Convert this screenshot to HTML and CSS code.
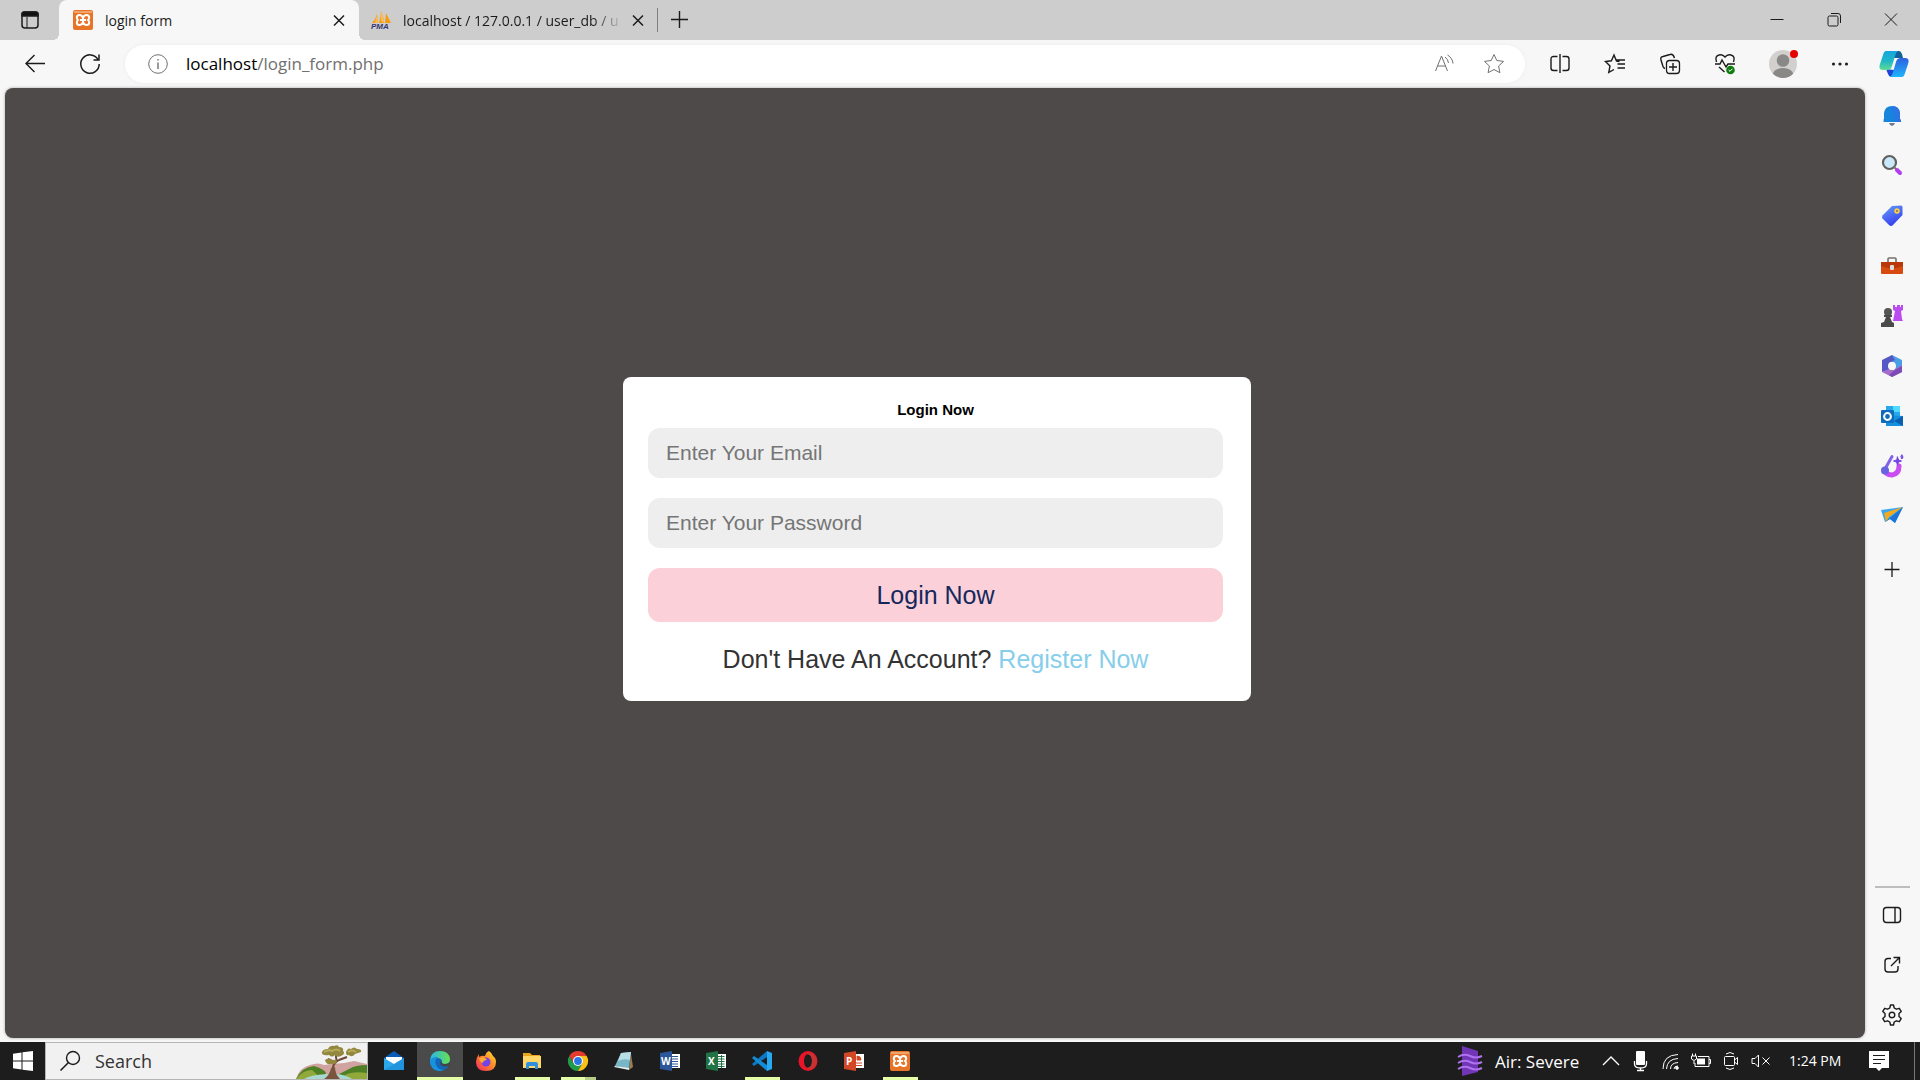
FILE: index.html
```html
<!DOCTYPE html>
<html lang="en">
<head>
<meta charset="utf-8">
<title>login form</title>
<link rel="stylesheet" href="styles.css">
</head>
<body>
<header class="tabstrip">
  <button class="tab-actions" aria-label="Tab actions"><svg class="icon" viewBox="0 0 20 20"><rect x="2" y="2" width="16" height="16" rx="3" stroke-width="1.500"/><path d="M2 4q0-2 2-2h12q2 0 2 2v2H2z" fill="#111" stroke-width="1.500"/><path d="M7 7v11"/></svg></button>
  <div class="tab tab-active">
    <svg class="icon" viewBox="0 0 20 20" stroke="none"><rect width="20" height="20" rx="2" fill="#e77427"/><path d="M1 1h18v2H1z" fill="#f0a36b"/><path d="M6.500 5Q3.800 5 3.800 7.500 3.800 9 5 10 3.800 11 3.800 12.500 3.800 15 6.500 15 9 15 10 12 11 15 13.500 15 16.200 15 16.200 12.500 16.200 11 15 10 16.200 9 16.200 7.500 16.200 5 13.500 5 11 5 10 8 9 5 6.500 5zM10 8v4M7 10h6" fill="none" stroke="#fff" stroke-width="2"/></svg>
    <span class="tab-title">login form</span>
    <button class="tab-close" aria-label="Close tab"><svg class="icon" viewBox="0 0 20 20"><path d="M5 5.500l10 10M15 5.500l-10 10" stroke-width="1.500"/></svg></button>
  </div>
  <div class="tab tab-other">
    <svg class="icon" viewBox="0 0 20 20" stroke="none"><path d="M1 13Q5 9 6 4l1 9zM8 13Q10 6 10 1q3 7 3 12zM14 13l1-10q3 6 5 10z" fill="#f89c0e"/><path d="M4 13l2-9 1 9zM10 1q3 7 3 12l-3-2z" fill="#fbbb5b"/><text x="0" y="19" class="pma">PMA</text></svg>
    <span class="tab-title tab-fade">localhost / 127.0.0.1 / user_db / u</span>
    <button class="tab-close" aria-label="Close tab"><svg class="icon" viewBox="0 0 20 20"><path d="M5 5.500l10 10M15 5.500l-10 10" stroke-width="1.500"/></svg></button>
  </div>
  <button class="new-tab" aria-label="New tab"><svg class="icon" viewBox="0 0 20 20"><path d="M9.500 1v17M1 9.500h17" stroke-width="1.400"/></svg></button>
  <div class="window-buttons">
    <button aria-label="Minimize"><svg class="icon" viewBox="0 0 20 20"><path d="M3.500 9.500h13"/></svg></button>
    <button aria-label="Restore"><svg class="icon" viewBox="0 0 20 20"><rect x="4" y="6" width="10" height="10" rx="1.500"/><path d="M7 3.500h7q2.500 0 2.500 2.500v7"/></svg></button>
    <button aria-label="Close"><svg class="icon" viewBox="0 0 20 20"><path d="M4 3.500l12 12M16 3.500l-12 12"/></svg></button>
  </div>
</header>

<nav class="toolbar" aria-label="Browser toolbar">
  <button aria-label="Back"><svg class="icon" viewBox="0 0 20 20"><path d="M20 9.500H1M9.500 1L1 9.500 9.500 18" stroke-width="1.400"/></svg></button>
  <button aria-label="Refresh"><svg class="icon" viewBox="0 0 20 20"><path d="M18 5.500A9.200 9.200 0 1 0 19.200 10M19 .5v5.500h-5.500" stroke-width="1.500"/></svg></button>
  <div class="address">
    <svg class="icon muted" viewBox="0 0 20 20"><circle cx="10" cy="10" r="9.300"/><path d="M10 8.500v6.500M10 5v1.600" stroke-width="1.400"/></svg>
    <span class="url">localhost<span class="url-path">/login_form.php</span></span>
    <button aria-label="Read aloud"><svg class="icon muted" viewBox="0 0 20 20"><path d="M1.500 17L7.500 2l6 15M3.500 12h8M11 3q3 2 3.500 6M13.500 1q5 3 5.500 8.500"/></svg></button>
    <button aria-label="Favorite"><svg class="icon muted" viewBox="0 0 20 20"><path d="M10 .5l2.800 6 6.700.9-4.900 4.600 1.300 6.700-5.900-3.200-5.900 3.200L5.400 12 .5 7.400l6.700-.9z" stroke-linejoin="round"/></svg></button>
  </div>
  <div class="tools">
    <button aria-label="Split screen"><svg class="icon" viewBox="0 0 20 20"><path d="M7.500 2.500H3.500Q1 2.500 1 5v9q0 2.500 2.500 2.500h4M12.500 2.500h4Q19 2.500 19 5v9q0 2.500-2.500 2.500h-4M10 0v19" stroke-width="1.400"/></svg></button>
    <button aria-label="Favorites"><svg class="icon" viewBox="0 0 20 20"><path d="M14.500 7.500l-3-.5L9 1 6.400 6.800.5 7.600 5 12l-1.200 6.400L9 15.500M12.500 10H20M11.500 6H20M12.500 14H20" stroke-width="1.400"/></svg></button>
    <button aria-label="Collections"><svg class="icon" viewBox="0 0 20 20"><rect x="6.500" y="6.500" width="13" height="13" rx="3" stroke-width="1.300"/><path d="M13 9v8M9 13h8M14.500 4Q13-.5 10 .5L3 2.500Q0 3 1 6l2 6.500q.5 1.500 2 2" stroke-width="1.400"/></svg></button>
    <button aria-label="Browser essentials"><svg class="icon" viewBox="0 0 20 20"><path d="M1.500 8Q-.5 2 4 1q3.500-1 6 2 2.500-3 6-2Q20.500 2 18.500 8M0 10h5l2-4 4 7 2-3h7M4 13l5.500 5" stroke-width="1.400"/><circle cx="15.500" cy="16" r="4.300" fill="#107c10" stroke="none"/><path d="M13.700 16l1.300 1.300 2.500-2.600" stroke="#fff"/></svg></button>
    <button class="profile" aria-label="Profile"><svg class="icon-profile" viewBox="0 0 30 30"><defs><clipPath id="avatar"><circle cx="15" cy="15" r="14"/></clipPath></defs><circle cx="15" cy="15" r="14" fill="#d2d0ce"/><g clip-path="url(#avatar)" fill="#8a8886"><circle cx="15" cy="11.500" r="6.300"/><ellipse cx="15" cy="26" rx="10.500" ry="7"/></g><circle cx="26" cy="5" r="4" fill="#e60000"/></svg></button>
    <button class="more" aria-label="Settings and more"><svg class="icon" viewBox="0 0 20 20"><g fill="#222" stroke="none"><circle cx="3.500" cy="10" r="1.600"/><circle cx="10" cy="10" r="1.600"/><circle cx="16.500" cy="10" r="1.600"/></g></svg></button>
    <button class="copilot" aria-label="Copilot"><svg class="icon-copilot" viewBox="0 0 30 28"><defs><linearGradient id="cp1" x2="0" y2="1"><stop stop-color="#16a5df"/><stop offset=".55" stop-color="#22b8c4"/><stop offset="1" stop-color="#62dc92"/></linearGradient><linearGradient id="cp2" x2="0" y2="1"><stop stop-color="#2b5fe0"/><stop offset="1" stop-color="#20b5fb"/></linearGradient></defs><path d="M14 1h6q2 0 3 3l1 4h-9z" fill="#126299"/><path d="M7 19l8 1v7h-3q-2 0-3-3z" fill="#1d45d9"/><path d="M7 1h12q-2 1-3 5l-3 10q-1 4-5 4H4q-5 0-3-6L4 5q1-4 3-4z" fill="url(#cp1)"/><path d="M23 27H11q2-1 3-5l3-10q1-4 5-4h4q5 0 3 6l-3 9q-1 4-3 4z" fill="url(#cp2)"/></svg></button>
  </div>
</nav>

<div class="workspace">
  <main class="page">
    <form class="card" onsubmit="return false">
      <h1 class="card-title">Login Now</h1>
      <input class="field" type="email" placeholder="Enter Your Email" aria-label="Email">
      <input class="field" type="password" placeholder="Enter Your Password" aria-label="Password">
      <button class="submit">Login Now</button>
      <p class="signup">Don't Have An Account? <a href="#">Register Now</a></p>
    </form>
  </main>

  <aside class="sidebar">
    <button aria-label="Notifications"><svg class="icon" viewBox="0 0 22 22" stroke="none"><path d="M3 16q-1.500-1 0-2V8q1-7 8-7t8 7v6q1.500 1 1 3H2z" fill="#1684dc"/><path d="M11 1q7 0 8 7v6q1.500 1 1 3h-5z" fill="#2b74e4"/><path d="M8 18h6q-1 3-3 3t-3-3" fill="#737b8b"/></svg></button>
    <button aria-label="Search"><svg class="icon" viewBox="0 0 22 22"><circle cx="8.500" cy="7.500" r="6.500" fill="#c9e9fb" stroke="#62615f" stroke-width="2.200"/><path d="M13 12l3 3" stroke="#777" stroke-width="2"/><path d="M16 15l3 3" stroke="#b43cf0" stroke-width="4" stroke-linecap="round"/></svg></button>
    <button aria-label="Shopping"><svg class="icon" viewBox="0 0 22 22" stroke="none"><defs><linearGradient id="tag" x2=".5" y2="1"><stop stop-color="#67a3fb"/><stop offset="1" stop-color="#373eed"/></linearGradient></defs><path d="M11 1l9-.5q1.500 0 1.500 1.500v8L12 20q-2 2-4 0l-6.500-6.500q-1-1 0-3z" fill="url(#tag)"/><circle cx="16" cy="6" r="2.700" fill="#ffd145"/><circle cx="16" cy="6" r="1" fill="#866b60"/></svg></button>
    <button aria-label="Tools"><svg class="icon" viewBox="0 0 22 22" stroke="none"><path d="M7 7V4q0-1 1-1h6q1 0 1 1v3" fill="none" stroke="#75706c" stroke-width="1.600"/><rect y="7" width="22" height="12" rx="1" fill="#d74a10"/><path d="M0 7h22v4l-11 3-11-3z" fill="#b83809"/><rect x="9" y="10" width="4" height="5" rx="1" fill="#ddd"/></svg></button>
    <button aria-label="Games"><svg class="icon" viewBox="0 0 22 22" stroke="none"><path d="M12 0h2v2h2V0h3v2h1V0h2v5l-2 1 1 8 1 2H12l2-10-2-1z" fill="#bb4cf0"/><circle cx="7" cy="7" r="4" fill="#555"/><path d="M3 10h8v2H9l2 5 2 1v4H0v-4l3-1 2-5H3z" fill="#4b4b4b"/></svg></button>
    <button aria-label="Microsoft 365"><svg class="icon" viewBox="0 0 22 22" stroke="none"><path d="M11 0l10 5v12l-7-3V8L7 5z" fill="#4b9de4"/><path d="M11 0L1 5v12l7-2V8l6-3z" fill="#5558c4"/><path d="M21 10v7l-10 5-10-5 7-3 4 1z" fill="#a56cc9"/><path d="M21 11v6l-10 5-3-2 6-5z" fill="#7b4cb5"/><circle cx="11" cy="11" r="4" fill="#f7f7f7"/></svg></button>
    <button aria-label="Outlook"><svg class="icon" viewBox="0 0 22 22" stroke="none"><path d="M5 1h14v12H5z" fill="#28a8ea"/><path d="M12 1h7v6h-7z" fill="#50d9ff"/><path d="M5 10l17 1v10H5z" fill="#1490df"/><path d="M22 11v10l-9-5z" fill="#0a5fb0"/><rect y="5" width="13" height="13" rx="1" fill="#0f6cbd"/><circle cx="6.500" cy="11.500" r="3.400" fill="none" stroke="#fff" stroke-width="2"/></svg></button>
    <button aria-label="Designer"><svg class="icon" viewBox="0 0 22 22" stroke-linecap="round"><path d="M4 15q1 5 7 5 7-1 7-9" stroke="#c94df2" stroke-width="5"/><path d="M11 1.500L4 14" stroke="#8363ec" stroke-width="3"/><circle cx="4" cy="15.500" r="4" fill="#6863df" stroke="none"/><path d="M16.500 2l1 3 3 1-3 1-1 3-1-3-3-1 3-1zM21 0l1 2-1 2-1-2z" fill="#7443e7" stroke="#7443e7"/></svg></button>
    <button aria-label="Drop"><svg class="icon" viewBox="0 0 22 22" stroke="none"><path d="M0 5l22-3-8 16-5-4-5 3z" fill="#3aa6f2"/><path d="M22 2L3 8l2 9 3-5z" fill="#f3a91d"/><path d="M22 2L4 17l5-3 5 4z" fill="#1c75d7"/></svg></button>
    <button class="sidebar-add" aria-label="Customize"><svg class="icon" viewBox="0 0 22 22"><path d="M11 4v15M3.500 11.500h15" stroke-width="1.300"/></svg></button>
    <div class="sidebar-bottom">
      <button aria-label="Hide sidebar"><svg class="icon" viewBox="0 0 22 22"><rect x="2.500" y="3.500" width="17" height="15" rx="3" stroke-width="1.400"/><path d="M14 3.500v15" stroke-width="1.400"/></svg></button>
      <button aria-label="Open link"><svg class="icon" viewBox="0 0 22 22"><path d="M10 4.500H7q-3 0-3 3V15q0 3 3 3h7q3 0 3-3v-3M10 12l8.500-8.500M12.500 3.500h6v6" stroke-width="1.400"/></svg></button>
      <button aria-label="Settings"><svg class="icon" viewBox="0 0 22 22"><path d="M9.500 1h3l.7 3 2.200 1.200L18.300 4.300l1.900 3.100L18 9.500v3l2.200 2.100-1.900 3.100-2.900-.9-2.200 1.200-.7 3h-3l-.7-3-2.200-1.200-2.900.9-1.900-3.100L4 12.500v-3L1.800 7.400l1.900-3.100 2.900.9L8.800 4z" stroke-width="1.400" stroke-linejoin="round"/><circle cx="11" cy="11" r="2.800" stroke-width="1.400"/></svg></button>
    </div>
  </aside>
</div>

<footer class="taskbar">
  <button class="start" aria-label="Start"><svg class="icon" viewBox="0 0 20 20"><path d="M0 2.800L8.500 1.500v8H0zM9.500 1.300L20 0v9.500H9.500zM0 10.500h8.500v8L0 17.300zM9.500 10.500H20V20L9.500 18.700z" fill="#fff" stroke="none"/></svg></button>
  <label class="search">
    <svg class="icon" viewBox="0 0 20 20"><circle cx="13" cy="7" r="6.500" stroke-width="1.400"/><path d="M8.500 11.500L.5 19.500" stroke-width="1.600"/></svg>
    <input type="text" placeholder="Search" aria-label="Search">
    <svg class="bonsai" viewBox="0 0 71 34" aria-hidden="true"><path d="M0 34Q4 22 14 20q8-3 14 0l8-1 12-1 10-2 13 3v15z" fill="#d1a3a0"/><path d="M0 34Q6 22 18 21q10 3 12 7l-2 6z" fill="#4f7f24"/><path d="M0 34q7-9 16-9l10 9z" fill="#91a83a"/><path d="M71 20q-12 0-18 4l-12 6 2 4h28z" fill="#4f7f24"/><path d="M71 28q-14-2-22 2l-8 4h30z" fill="#91a83a"/><path d="M8 34q6-4 22-5h12q10 2 14 5z" fill="#a8d8d0"/><path d="M34 34q4-7 3-12 1-4 6-7l8-3M38 20q0-4-6-6M41 16q-2-4 0-9" fill="none" stroke="#6e4a36" stroke-width="2"/><path d="M28 34q6-4 7-11l4-1q0 7 5 12z" fill="#7b543d"/><g fill="#93883e"><path d="M26 7q1-3 6-3 2-4 6-3 4-2 5 1 5 0 4 4 3 3-2 5-4 2-6-1-3 3-6 0-8 1-7-3z"/><path d="M50 7q2-5 5-3 3-3 6 0 5 0 4 3-3 1-6 2-3 4-6 1-3 1-3-3zM29 15q3-3 7 0 5-1 5 2-2 3-6 2-5 1-6-4z"/></g><path d="M28 7q5-3 8-1 5-3 8 0M52 7q4-3 8 0" fill="none" stroke="#b6ac5c" stroke-width="2"/></svg>
  </label>
  <nav class="apps" aria-label="Apps">
    <button aria-label="Mail"><svg class="icon" viewBox="0 0 20 20" stroke="none"><path d="M0 7l10-7 10 7v5H0z" fill="#0a5cb8"/><path d="M2 6h16v9H2z" fill="#fff"/><path d="M0 7l10 6 10-6v12H0z" fill="#2ba8ea"/><path d="M0 19L20 7v12z" fill="#1682cf" opacity=".5"/></svg></button>
    <button class="running current" aria-label="Edge"><svg class="icon" viewBox="0 0 20 20" stroke="none"><defs><linearGradient id="edge"><stop stop-color="#2ab5e8"/><stop offset="1" stop-color="#66e34f"/></linearGradient></defs><circle cx="10" cy="10" r="10" fill="#1267b9"/><path d="M0 9Q1 0 10 0q9 0 10 8 0 5-5 5-4 0-3-2 0-4-5-4-4 0-7 2z" fill="url(#edge)"/><path d="M0 9q4-4 8-3Q4 9 6 14t8 5Q5 22 1 15-.5 12 0 9" fill="#1793dd"/><path d="M12 10q-1 3 3 3 3 0 5-2v3q-5 3-9 0-2-2 1-4z" fill="#454545"/></svg></button>
    <button aria-label="Firefox"><svg class="icon" viewBox="0 0 20 20" stroke="none"><defs><linearGradient id="fox" x1="1" x2="0" y2="1"><stop stop-color="#ffe83a"/><stop offset=".45" stop-color="#ff8a25"/><stop offset="1" stop-color="#f0246a"/></linearGradient></defs><path d="M13 0q3 2 4 5 3 2 3 6 0 9-10 9T0 11q0-4 3-8v3q3-2 6-1 1-4 4-5" fill="url(#fox)"/><circle cx="10" cy="11" r="4.500" fill="#7542e5"/><path d="M3 8q3-3 6-1l2 2q-4 0-4 3-3-1-4-4" fill="#ffab32"/></svg></button>
    <button class="running" aria-label="File Explorer"><svg class="icon" viewBox="0 0 20 20" stroke="none"><path d="M1 2h7l2 2h8v4H1z" fill="#e9a61c"/><path d="M1 5h18v12H1z" fill="#ffd768"/><path d="M4 18v-5q0-2 2-2h8q2 0 2 2v5h-3v-3H7v3z" fill="#2f8fdc"/></svg></button>
    <button class="running stacked" aria-label="Chrome"><svg class="icon" viewBox="0 0 20 20" stroke="none"><path d="M1.300 5A10 10 0 0 1 18.700 5H10l-4.300 7.500z" fill="#e33b2e"/><path d="M1.300 5A10 10 0 0 0 10 20l4.300-7.500H5.700z" fill="#229a4b"/><path d="M18.700 5A10 10 0 0 1 10 20l4.300-7.500L10 5z" fill="#fbc116"/><circle cx="10" cy="10" r="5" fill="#fff"/><circle cx="10" cy="10" r="3.900" fill="#2b76e5"/></svg></button>
    <button aria-label="Notepad"><svg class="icon" viewBox="0 0 20 20" stroke="none"><path d="M17 3l2 13-4 3z" fill="#9d7c4f"/><path d="M7 2l10-1-2 17-14-3z" fill="#78b5c5"/><path d="M7 2l10-1-1 8q-6-2-12 1z" fill="#b8dee3"/><path d="M1 15l14 2v2L0 16z" fill="#e4eff0"/></svg></button>
    <button aria-label="Word"><svg class="icon" viewBox="0 0 20 20" stroke="none"><path d="M10 3h10v14H10z" fill="#fff"/><path d="M12 5.500h6M12 8h6M12 10.500h6M12 13h6M12 15.500h6" stroke="#2b579a"/><path d="M0 2l12-2v20L0 18z" fill="#2b579a"/><text x="1" y="14" class="office">W</text></svg></button>
    <button aria-label="Excel"><svg class="icon" viewBox="0 0 20 20" stroke="none"><path d="M10 3h10v14H10z" fill="#fff"/><path d="M12 5.500h6.500M12 8h6.500M12 10.500h6.500M12 13h6.500M12 15.500h6.500M15.500 4v13" stroke="#217346"/><path d="M0 2l12-2v20L0 18z" fill="#217346"/><text x="2" y="14" class="office">X</text></svg></button>
    <button class="running" aria-label="Visual Studio Code"><svg class="icon" viewBox="0 0 20 20" stroke="none"><path d="M15 0l5 2v16l-5 2z" fill="#29a8f2"/><path d="M15 0v6L2 15l-2-2z" fill="#0b78c5"/><path d="M15 20v-6L2 5 0 7z" fill="#148bd5"/></svg></button>
    <button aria-label="Opera"><svg class="icon" viewBox="0 0 20 20" stroke="none"><path fill-rule="evenodd" d="M10 0a9.500 10 0 1 0 0 20 9.500 10 0 1 0 0-20m0 3a4 7 0 1 1 0 14 4 7 0 1 1 0-14" fill="#e91428"/><path d="M14 2q5 3 5 8t-5 8q-3 1-6-1 6 0 6-7t-6-7q3-2 6-1" fill="#c93232"/></svg></button>
    <button aria-label="PowerPoint"><svg class="icon" viewBox="0 0 20 20" stroke="none"><path d="M10 3h10v14H10z" fill="#fff"/><path d="M13 5v4h4a4 4 0 0 0-4-4M12 12h6M12 14.500h6" stroke="#d24726" fill="#d24726"/><path d="M0 2l12-2v20L0 18z" fill="#d24726"/><text x="2" y="14" class="office">P</text></svg></button>
    <button class="running" aria-label="XAMPP"><svg class="icon" viewBox="0 0 20 20" stroke="none"><rect width="20" height="20" rx="2" fill="#e77427"/><path d="M1 1h18v2H1z" fill="#f0a36b"/><path d="M6.500 5Q3.800 5 3.800 7.500 3.800 9 5 10 3.800 11 3.800 12.500 3.800 15 6.500 15 9 15 10 12 11 15 13.500 15 16.200 15 16.200 12.500 16.200 11 15 10 16.200 9 16.200 7.500 16.200 5 13.500 5 11 5 10 8 9 5 6.500 5zM10 8v4M7 10h6" fill="none" stroke="#fff" stroke-width="2"/></svg></button>
  </nav>
  <div class="tray">
    <button class="weather"><svg class="icon-weather" viewBox="0 0 26 30"><path d="M5 0l16 5v21L5 30z" fill="#7135b5"/><path d="M1 11q6-4 12-1t12 0M1 17q6-4 12-1t12 0M1 23q6-4 12-1t12 0" fill="none" stroke="#ae72ee" stroke-width="2"/></svg>Air: Severe</button>
    <button aria-label="Show hidden icons"><svg class="icon" viewBox="0 0 20 20"><path d="M2 14l8-8 8 8" stroke-width="1.300"/></svg></button>
    <button aria-label="Microphone"><svg class="icon" viewBox="0 0 20 20"><rect x="5" y="0" width="9" height="14" rx="1" fill="#fff" stroke="none"/><path d="M3.500 10v3q0 4 6 4t6-4v-3M9.500 17v3M6 19.500h7" stroke-width="1.300"/></svg></button>
    <button aria-label="Network"><svg class="icon" viewBox="0 0 20 20"><path d="M2 18Q2 4 17 3.500M5.500 18Q6 8 17 7.500M9.500 18q0-6 7.500-6.500M13 18q0-3 4-3"/><circle cx="16" cy="17" r="1.300" fill="#fff"/></svg></button>
    <button aria-label="Battery"><svg class="icon" viewBox="0 0 20 20"><path d="M7 5.500h11v10H4V12M18 8.500h1.500v4H18"/><path d="M6 7.500h8v6H6z" fill="#fff" stroke="none"/><path d="M.5 5h5v3q-2.500 3-5 0zM1.500 5V2.500M4.500 5V2.500M3 10v3"/></svg></button>
    <button aria-label="Meet now"><svg class="icon" viewBox="0 0 20 20"><rect x="3.500" y="5.500" width="10" height="9" rx="1"/><path d="M13.500 9l3-2.500v7l-3-2.500M5 3q4-3 8 0M5 17q4 3 8 0"/></svg></button>
    <button aria-label="Volume"><svg class="icon" viewBox="0 0 20 20"><path d="M1 7.500h3L7.500 4v12L4 12.500H1zM11.500 6.500l7 7M18.500 6.500l-7 7"/></svg></button>
    <time class="clock">1:24 PM</time>
    <button class="action" aria-label="Notifications"><svg class="icon" viewBox="0 0 20 20"><path d="M0 0h20v17h-7l-3 3-3-3H0z" fill="#fff" stroke="none"/><path d="M4 4.500h12M4 8.500h12M4 12.500h8" stroke="#1d1d1d"/></svg></button>
    <span class="show-desktop"></span>
  </div>
</footer>
</body>
</html>
```

FILE: styles.css
```css
* { box-sizing: border-box; }

body {
  margin: 0;
  min-height: 100vh;
  display: flex;
  flex-direction: column;
  background: #f7f7f7;
  color: #1b1b1b;
  font-family: "Open Sans", "Noto Sans", sans-serif;
  font-size: 14px;
}

button {
  display: flex;
  align-items: center;
  justify-content: center;
  padding: 0;
  border: 0;
  background: none;
  color: inherit;
  font: inherit;
}

.icon {
  width: 20px;
  height: 20px;
  flex: none;
  fill: none;
  stroke: #1b1b1b;
  overflow: visible;
}

.icon[stroke="none"] { stroke: none; }
.muted { stroke: #707070; }

.pma {
  fill: #34386e;
  font: italic bold 8px "Liberation Sans", sans-serif;
}

.office {
  fill: #fff;
  font: bold 10px "Open Sans", sans-serif;
}

/* Tab strip */
.tabstrip {
  display: flex;
  height: 40px;
  background: #cdcdcd;
}

.tab-actions { width: 59px; }

.tab {
  display: flex;
  align-items: center;
  gap: 12px;
  height: 40px;
}

.tab-active {
  position: relative;
  width: 300px;
  padding: 0 10px 0 14px;
  border-radius: 8px 8px 0 0;
  background: #f7f7f7;
}

.tab-active::before,
.tab-active::after {
  content: "";
  position: absolute;
  bottom: 0;
  width: 6px;
  height: 6px;
}

.tab-active::before {
  left: -6px;
  background: radial-gradient(circle at 0 0, #cdcdcd 6px, #f7f7f7 6px);
}

.tab-active::after {
  right: -6px;
  background: radial-gradient(circle at 100% 0, #cdcdcd 6px, #f7f7f7 6px);
}

.tab-other {
  width: 298px;
  padding: 0 9px 0 12px;
}

.tab-title {
  flex: 1;
  white-space: nowrap;
}

.tab-fade {
  margin-right: -5px;
  mask-image: linear-gradient(to right, #000 190px, transparent 220px);
}

.new-tab {
  align-self: center;
  width: 45px;
  height: 24px;
  border-left: 1px solid #808080;
}

.window-buttons {
  display: flex;
  margin: 0 1px 0 auto;
}

.window-buttons button { width: 57px; }

/* Toolbar */
.toolbar {
  display: flex;
  align-items: center;
  height: 48px;
  padding-left: 7px;
}

.toolbar button {
  width: 55px;
  height: 40px;
}

.address {
  display: flex;
  flex: 1;
  align-items: center;
  height: 38px;
  margin: 0 7px 0 8px;
  padding: 0 6px 0 23px;
  border-radius: 19px;
  background: #fff;
  box-shadow: 0 0 4px #0000000d;
}

.address button { width: 50px; }

.url {
  flex: 1;
  margin-left: 18px;
  padding-bottom: 2px;
  color: #000;
  font-size: 17px;
}

.url-path { color: #707070; }
.tools { display: flex; }

.toolbar .profile { width: 61px; }
.toolbar .more { width: 54px; }
.toolbar .copilot { width: 53px; }

.icon-profile {
  width: 30px;
  height: 30px;
}

.icon-copilot {
  width: 30px;
  height: 28px;
}

/* Page and sidebar */
.workspace {
  display: flex;
  flex: 1;
  padding-left: 5px;
}

.page {
  display: flex;
  flex: 1;
  align-items: center;
  justify-content: center;
  margin-bottom: 4px;
  padding: 20px 20px 68px 24px;
  border-radius: 8px;
  background: #4e4a49;
  box-shadow: 0 0 3px #00000059;
  font-family: "Liberation Sans", Arial, sans-serif;
}

.card {
  display: flex;
  flex-direction: column;
  width: 100%;
  max-width: 628px;
  padding: 24px 28px 26px 25px;
  border-radius: 8px;
  background: #fff;
  text-align: center;
}

.card-title {
  margin: 0 0 9px;
  color: #000;
  font-size: 15px;
  line-height: 18px;
}

.field {
  height: 50px;
  margin: 0 0 20px;
  padding: 0 18px;
  border: 0;
  border-radius: 12px;
  background: #eee;
  font: 21px "Liberation Sans", Arial, sans-serif;
}

.field::placeholder { color: #757575; }

.submit {
  height: 54px;
  border-radius: 12px;
  background: #fbd0d9;
  color: #14285c;
  font-size: 25px;
}

.signup {
  margin: 21px 0 0;
  color: #333;
  font-size: 25px;
  line-height: 32px;
}

.signup a {
  color: #87ceeb;
  text-decoration: none;
}

.sidebar {
  display: flex;
  flex-direction: column;
  width: 55px;
  padding: 3px 0 2px;
}

.sidebar button {
  width: 54px;
  height: 50px;
}

.sidebar .icon {
  width: 22px;
  height: 22px;
}

.sidebar .sidebar-add { margin-top: 3px; }
.sidebar-bottom { margin-top: auto; }

.sidebar-bottom::before {
  content: "";
  display: block;
  height: 2px;
  margin: 0 10px 2px;
  background: #bdbdbd;
}

/* Taskbar */
.taskbar {
  display: flex;
  height: 38px;
  background: #1d1d1d;
  color: #fff;
}

.start { width: 45px; }

.search {
  display: flex;
  align-items: center;
  width: 323px;
  padding-left: 14px;
  border: 1px solid #b5b5b5;
  background: #f1f1f1;
}

.search input {
  flex: 1;
  min-width: 0;
  padding: 0 0 0 15px;
  border: 0;
  background: none;
  font: 18px "Open Sans", sans-serif;
}

.search input::placeholder { color: #333; }

.bonsai {
  width: 71px;
  height: 34px;
  align-self: flex-end;
}

.apps {
  display: flex;
  padding-left: 3px;
}

.apps button {
  width: 46px;
  height: 38px;
}

.apps .running {
  background: linear-gradient(#e5ffa6, #e5ffa6) center bottom / 35px 3px no-repeat;
}

.apps .current {
  background-color: #4a4a4a;
  background-size: 46px 3px;
}

.apps .stacked {
  background-image: linear-gradient(to right, #e5ffa6 24px, #b8cc88 24px);
}

.tray {
  display: flex;
  margin-left: auto;
}

.tray button { width: 30px; }
.tray .icon { stroke: #fff; }

.tray .weather {
  width: 146px;
  gap: 12px;
  padding-left: 7px;
  justify-content: flex-start;
  font-size: 17px;
  white-space: nowrap;
}

.icon-weather {
  width: 26px;
  height: 30px;
  flex: none;
}

.clock {
  width: 68px;
  padding-left: 13px;
  line-height: 38px;
  white-space: nowrap;
}

.tray .action { width: 70px; }

.show-desktop {
  width: 6px;
  border-left: 1px solid #777;
}
```
